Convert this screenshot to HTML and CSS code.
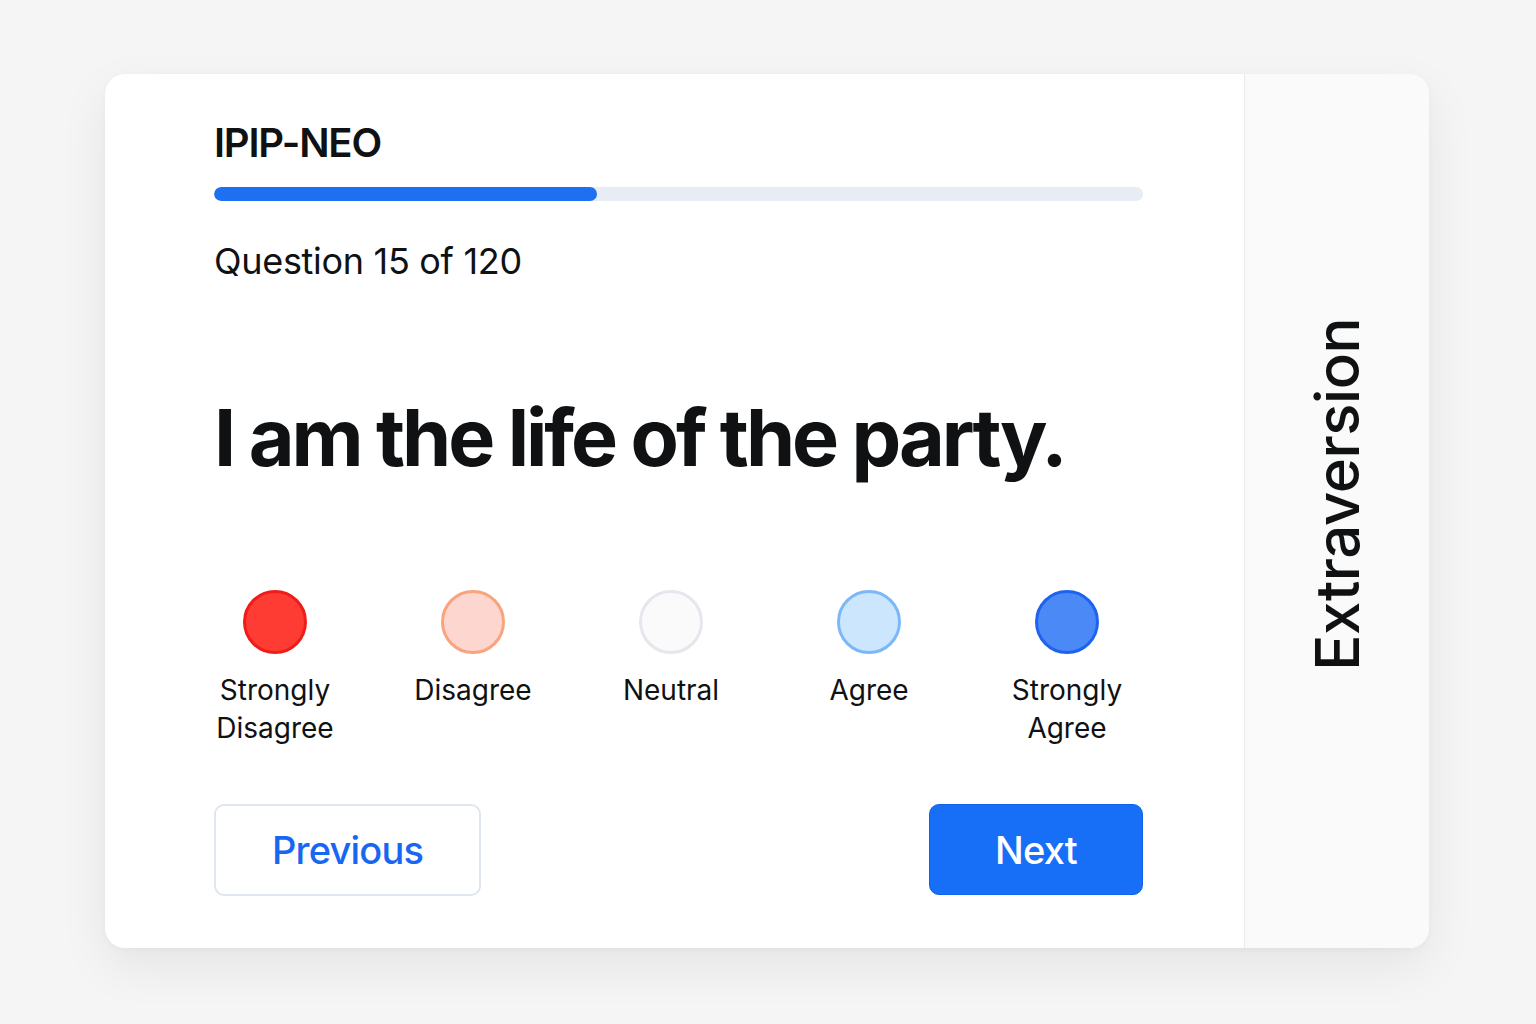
FILE: index.html
```html
<!DOCTYPE html>
<html lang="en">
<head>
<meta charset="utf-8">
<title>IPIP-NEO</title>
<link rel="stylesheet" href="styles.css">
</head>
<body>
<div class="card">
  <main class="main">
    <h1 class="title">IPIP-NEO</h1>
    <div class="progress"><div class="progress-fill" style="width:41.2%"></div></div>
    <p class="counter">Question 15 of 120</p>
    <h2 class="question">I am the life of the party.</h2>
    <div class="options">
      <div class="option">
        <span class="dot dot-sd"></span>
        <span class="label">Strongly<br>Disagree</span>
      </div>
      <div class="option">
        <span class="dot dot-d"></span>
        <span class="label">Disagree</span>
      </div>
      <div class="option">
        <span class="dot dot-n"></span>
        <span class="label">Neutral</span>
      </div>
      <div class="option">
        <span class="dot dot-a"></span>
        <span class="label">Agree</span>
      </div>
      <div class="option">
        <span class="dot dot-sa"></span>
        <span class="label">Strongly<br>Agree</span>
      </div>
    </div>
    <div class="nav">
      <button class="btn btn-prev">Previous</button>
      <button class="btn btn-next">Next</button>
    </div>
  </main>
  <aside class="side">
    <span class="side-label">Extraversion</span>
  </aside>
</div>
</body>
</html>
```

FILE: styles.css
```css
* { box-sizing: border-box; }

html, body {
  margin: 0;
  padding: 0;
}

body {
  background: #f5f5f5;
  font-family: Inter, "Noto Sans", "Liberation Sans", sans-serif;
  color: #0f1113;
  padding: 74px 107px 76px 105px;
  height: 1024px;
}

.card {
  display: flex;
  height: 874px;
  background: #ffffff;
  border-radius: 20px;
  box-shadow: 0 18px 50px rgba(0, 0, 0, 0.07), 0 2px 6px rgba(0, 0, 0, 0.03);
  overflow: hidden;
}

.main {
  flex: 1;
  min-width: 0;
  padding: 45px 101px 52px 109px;
  display: flex;
  flex-direction: column;
}

.main > * { flex-shrink: 0; }

.title {
  margin: 0;
  font-size: 40px;
  line-height: 48px;
  font-weight: 600;
  letter-spacing: -1.2px;
}

.progress {
  margin-top: 20px;
  height: 14px;
  border-radius: 7px;
  background: #e8edf5;
  overflow: hidden;
}

.progress-fill {
  height: 100%;
  border-radius: 7px;
  background: #1f6ff3;
}

.counter {
  margin: 38px 0 0;
  font-size: 36px;
  line-height: 44px;
  font-weight: 400;
  letter-spacing: -0.3px;
}

.question {
  margin: 113px 0 0;
  font-size: 79px;
  line-height: 82px;
  font-weight: 700;
  letter-spacing: -3.1px;
  white-space: nowrap;
}

.options {
  margin-top: 112px;
  display: grid;
  grid-template-columns: repeat(5, 122px);
  column-gap: 76px;
}

.option {
  display: flex;
  flex-direction: column;
  align-items: center;
}

.dot {
  width: 64px;
  height: 64px;
  border-radius: 50%;
  border: 3px solid;
}

.dot-sd { background: #fe3c34; border-color: #f01c1a; }
.dot-d  { background: #fdd6d0; border-color: #f9a47c; }
.dot-n  { background: #fafafa; border-color: #e4e7ec; }
.dot-a  { background: #cce6fd; border-color: #7bb8f9; }
.dot-sa { background: #4b89f7; border-color: #1e63f0; }

.label {
  margin-top: 17px;
  font-size: 28px;
  line-height: 38px;
  text-align: center;
  white-space: nowrap;
}

.nav {
  margin-top: auto;
  display: flex;
  justify-content: space-between;
  align-items: flex-start;
}

.btn {
  font-family: Inter, "Noto Sans", "Liberation Sans", sans-serif;
  font-size: 38px;
  font-weight: 500;
  letter-spacing: -0.8px;
  border-radius: 10px;
  cursor: pointer;
}

.btn-prev {
  width: 267px;
  height: 92px;
  background: #ffffff;
  border: 2px solid #dfe6f0;
  color: #1867f3;
}

.btn-next {
  width: 214px;
  height: 91px;
  background: #176ef7;
  border: 1px solid #1162ea;
  color: #ffffff;
}

.side {
  width: 185px;
  background: #fafafa;
  border-left: 1px solid #e6e9ee;
  display: flex;
  align-items: center;
  justify-content: center;
  padding-bottom: 34px;
}

.side-label {
  writing-mode: vertical-rl;
  transform: rotate(180deg);
  font-size: 60px;
  font-weight: 500;
  letter-spacing: -0.5px;
  line-height: 1;
}
```
